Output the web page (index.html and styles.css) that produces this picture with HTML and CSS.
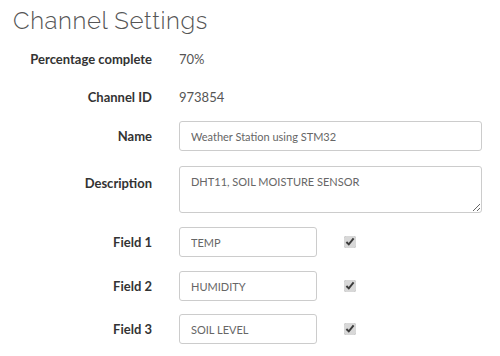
FILE: index.html
```html
<!DOCTYPE html>
<html>
<head>
<meta charset="utf-8">
<link rel="stylesheet" href="styles.css">
</head>
<body>
<div class="page">
  <h1 class="title">Channel Settings</h1>
  <div class="form">
    <div class="row row-text">
      <div class="label">Percentage complete</div>
      <div class="value">70%</div>
    </div>
    <div class="row row-text row-id">
      <div class="label">Channel ID</div>
      <div class="value">973854</div>
    </div>
    <div class="row row-name">
      <div class="label">Name</div>
      <input class="input input-wide" type="text" value="Weather Station using STM32">
    </div>
    <div class="row row-top">
      <div class="label label-top">Description</div>
      <textarea class="input textarea">DHT11, SOIL MOISTURE SENSOR</textarea>
    </div>
    <div class="row row-field">
      <div class="label">Field 1</div>
      <input class="input input-short" type="text" value="TEMP">
      <input class="check" type="checkbox" checked>
    </div>
    <div class="row row-field">
      <div class="label">Field 2</div>
      <input class="input input-short" type="text" value="HUMIDITY">
      <input class="check" type="checkbox" checked>
    </div>
    <div class="row row-field">
      <div class="label">Field 3</div>
      <input class="input input-short" type="text" value="SOIL LEVEL">
      <input class="check" type="checkbox" checked>
    </div>
  </div>
</div>
</body>
</html>
```
FILE: styles.css
```css
* { box-sizing: border-box; }
html, body { margin: 0; padding: 0; background: #fff; }
body { font-family: "Source Sans Pro", "Lato", "Open Sans", sans-serif; color: #333; }
.page { padding: 4px 0 0 13px; }
.title {
  margin: 0;
  font-family: "Raleway", "Lato", "Open Sans", sans-serif;
  font-weight: 300;
  font-size: 24px;
  line-height: 34px;
  color: #555;
  letter-spacing: 0.6px;
}
.form { display: flex; flex-direction: column; margin-top: 11px; }
.row { display: flex; align-items: center; }
.label {
  width: 139px;
  text-align: right;
  font-weight: 700;
  font-size: 13px;
  color: #333;
  flex: none;
}
.value { margin-left: 27px; font-size: 13px; color: #555; }
.row-text { height: 20px; margin-bottom: 18px; }
.row-id { margin-bottom: 14px; }
.input {
  margin-left: 27px;
  height: 30px;
  border: 1px solid #ccc;
  border-radius: 3px;
  padding: 0 11px;
  font-family: inherit;
  font-size: 11px;
  color: #666;
  background: #fff;
}
.input-wide { width: 303px; }
.row-name { margin-bottom: 15px; }
.row-top { align-items: flex-start; margin-bottom: 14px; }
.label-top { padding-top: 9px; }
.textarea { width: 303px; height: 47px; padding: 8px 11px; resize: vertical; line-height: 14px; }
.input-short { width: 138px; }
.row-field { margin-bottom: 14px; }
.row-field:nth-child(6) { margin-bottom: 13px; }
.check { margin: 0 0 0 27px; width: 12px; height: 12px; accent-color: #d8d8d8; }
```
